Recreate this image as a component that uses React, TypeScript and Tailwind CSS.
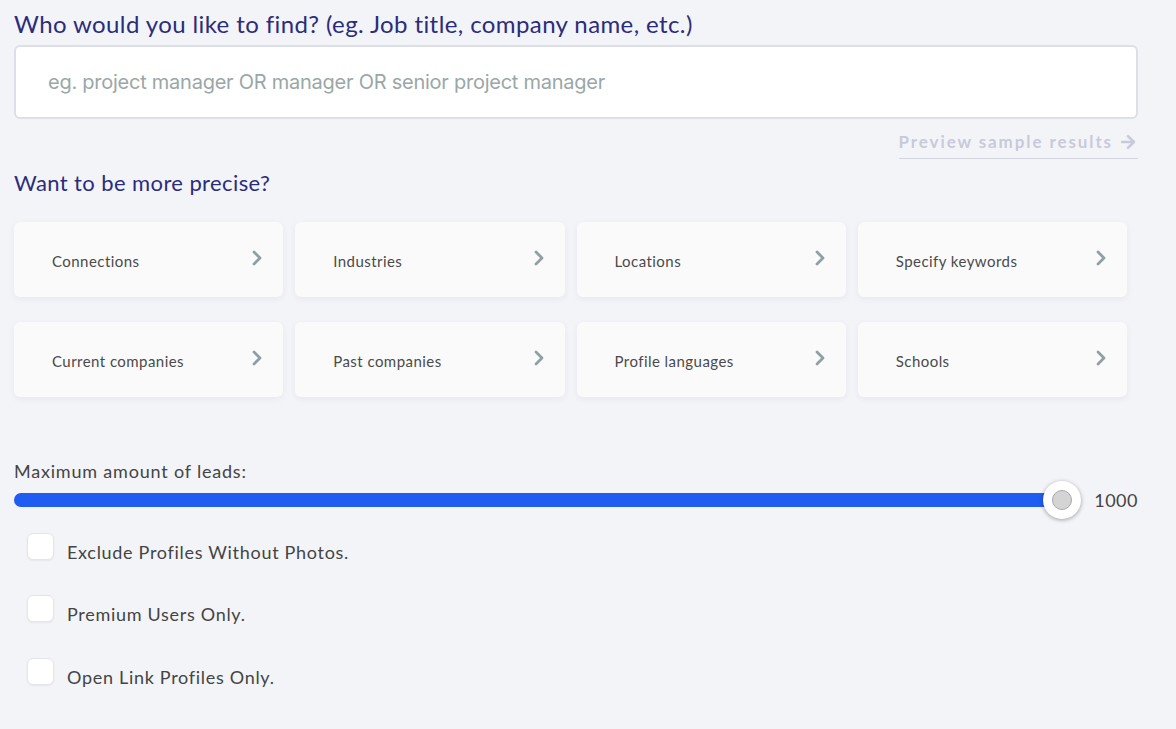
import {ChevronRight, ArrowRight} from 'lucide-react'

const filters = [
  'Connections',
  'Industries',
  'Locations',
  'Specify keywords',
  'Current companies',
  'Past companies',
  'Profile languages',
  'Schools',
]

const options = [
  'Exclude Profiles Without Photos.',
  'Premium Users Only.',
  'Open Link Profiles Only.',
]

const FilterCard: React.FC<{label: string}> = ({label}) => (
  <button className="flex h-[75px] items-center justify-between rounded-md bg-[#fafafa] pl-[38px] pr-[14px] text-left shadow-[0_2px_6px_rgba(40,50,90,0.06)]">
    <span className="pt-[5px] text-[15px] tracking-[0.45px] text-[#4a4a4a]">{label}</span>
    <ChevronRight className="-mt-[2px] h-[24px] w-[24px] text-[#8fa0a4]" strokeWidth={2.8} />
  </button>
)

export default function App() {
  return (
    <div
      className="min-h-[729px] bg-[#f3f4f8] pl-[14px] pr-[38px] pt-[8px]"
      style={{fontFamily: 'Lato, "Open Sans", sans-serif'}}
    >
      <h1 className="text-[24px] leading-[32px] tracking-[0.4px] text-[#2b2c7c]">
        Who would you like to find? (eg. Job title, company name, etc.)
      </h1>
      <div className="mt-[5px] flex h-[74px] items-center rounded-md border-2 border-[#dcdee8] bg-white pl-[32px]">
        <input
          className="w-full bg-transparent text-[20px] text-[#9aa7a7] outline-none placeholder:text-[#9aa7a7]"
          style={{fontFamily: 'Inter, sans-serif', letterSpacing: '-0.25px'}}
          placeholder="eg. project manager OR manager OR senior project manager"
        />
      </div>
      <div className="mt-[10px] flex justify-end">
        <a className="flex items-center gap-[5px] border-b border-[#d3d5e0] pb-[3px] text-[17px] font-bold tracking-[1.9px] text-[#c8cada]">
          Preview sample results
          <ArrowRight className="h-[20px] w-[20px]" strokeWidth={3.2} />
        </a>
      </div>
      <h2 className="mt-[9px] text-[22px] leading-[30px] tracking-[0.4px] text-[#2b2c7c]">Want to be more precise?</h2>
      <div className="mt-[24px] grid w-[1113px] grid-cols-4 gap-x-[12px] gap-y-[25px]">
        {filters.map(f => (
          <FilterCard key={f} label={f} />
        ))}
      </div>

      <div className="mt-[62px] text-[18px] leading-[24px] tracking-[0.8px] text-[#444]">Maximum amount of leads:</div>
      <div className="mt-[4px] flex items-center">
        <div className="relative h-[14px] w-[1062px] rounded-full bg-[#1f5cf2]">
          <div className="absolute right-[-19px] top-1/2 flex h-[38px] w-[38px] -translate-y-1/2 items-center justify-center rounded-full bg-white shadow-[0_1px_4px_rgba(0,0,0,0.35)]">
            <div className="h-[20px] w-[20px] rounded-full border border-[#a8a8a8] bg-[#d4d4d4]" />
          </div>
        </div>
        <span className="ml-[32px] text-[18px] tracking-[0.5px] text-[#444]">1000</span>
      </div>

      <div className="mt-[19px] flex flex-col gap-[31.5px] pl-[13px]">
        {options.map(o => (
          <label key={o} className="flex items-start gap-[13px]">
            <span className="h-[27px] w-[27px] rounded-md border border-[#e3e5ec] bg-white shadow-[0_1px_2px_rgba(0,0,0,0.06)]" />
            <span className="mt-[7px] text-[18px] leading-[24px] tracking-[0.7px] text-[#444]">{o}</span>
          </label>
        ))}
      </div>
    </div>
  )
}
